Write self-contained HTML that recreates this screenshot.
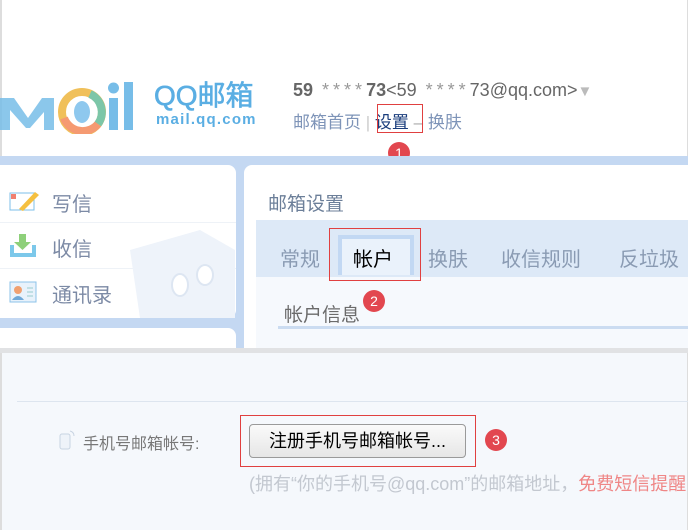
<!DOCTYPE html>
<html><head><meta charset="utf-8"><style>
*{margin:0;padding:0;box-sizing:border-box}
body{width:688px;height:530px;overflow:hidden;background:#fff;font-family:"Liberation Sans","Noto Sans CJK SC",sans-serif;position:relative}
.a{position:absolute}
.badge{position:absolute;width:22px;height:22px;border-radius:50%;background:#e2474f;color:#fff;font-size:14px;line-height:22px;text-align:center}
.nav{font-size:20px;color:#7c8aa5;position:absolute;left:52px}
.st{color:#999;letter-spacing:4px;font-weight:normal}
</style></head><body>
<div class="a" style="left:0;top:0;width:2px;height:530px;background:#ddd"></div>
<div class="a" style="right:0;top:0;width:1px;height:530px;background:#ddd"></div>
<!-- logo -->
<svg class="a" style="left:0;top:78px" width="150" height="56">
<path d="M0 20 L14 20 L28 40 L42 20 L54 20 L54 52 L44 52 L44 34 L30 50 L26 50 L10 32 L10 52 L0 52Z" fill="#77bde8" opacity=".85"/>
<circle cx="82" cy="34" r="20" fill="none" stroke="#f0c05a" stroke-width="8"/>
<path d="M64 40 A20 20 0 0 0 98 46" fill="none" stroke="#f59a72" stroke-width="8"/>
<path d="M90 16 A20 20 0 0 1 98 46" fill="none" stroke="#7cc6a8" stroke-width="8"/>
<ellipse cx="82" cy="34" rx="8" ry="11" fill="#8ec8ee"/>
<rect x="109" y="20" width="9" height="32" fill="#77bde8"/><circle cx="113.5" cy="10" r="5.5" fill="#77bde8"/>
<rect x="124" y="4" width="9" height="48" fill="#77bde8"/>
</svg>
<div class="a" style="left:154px;top:80px;font-size:28px;line-height:32px;color:#5aaee3;-webkit-text-stroke:0.6px #5aaee3">QQ邮箱</div>
<div class="a" style="left:156px;top:111px;font-size:15px;line-height:18px;font-weight:bold;color:#5aaee3;letter-spacing:1.2px">mail.qq.com</div>
<div class="a" style="left:293px;top:80px;font-size:18px;color:#666;white-space:nowrap"><b>59</b><span class="st"> ****</span><b>73</b>&lt;59<span class="st"> ****</span>73@qq.com&gt;<span style="color:#bbb;font-size:15px">▼</span></div>
<div class="a" style="left:293px;top:108px;font-size:17px;color:#7e94b8">邮箱首页 <span style="color:#ccc">|</span> <span style="color:#1a3d7c">设置</span> <span style="color:#aaa">–</span> 换肤</div>
<div class="a" style="left:377px;top:104px;width:46px;height:29px;border:1px solid #e04040"></div>
<div class="badge" style="left:388px;top:142px">1</div>
<!-- blue band -->
<div class="a" style="left:0;top:156px;width:688px;height:192px;background:#c4d8f2"></div>
<div class="a" style="left:0;top:165px;width:236px;height:153px;background:#fff;border-radius:0 8px 8px 0"></div>
<div class="a" style="left:0;top:222px;width:236px;height:1px;background:#eef2f7"></div>
<div class="a" style="left:0;top:268px;width:236px;height:1px;background:#eef2f7"></div>
<svg class="a" style="left:120px;top:230px" width="115" height="88"><path d="M10 20 L80 0 L115 20 L115 88 L20 88Z" fill="#eef3fa"/><ellipse cx="60" cy="55" rx="8" ry="11" fill="#fff" stroke="#dde6f2" stroke-width="2"/><ellipse cx="85" cy="45" rx="8" ry="10" fill="#fff" stroke="#dde6f2" stroke-width="2"/></svg>
<div class="a" style="left:0;top:328px;width:236px;height:20px;background:#fff;border-radius:0 8px 0 0"></div>
<svg class="a" style="left:9px;top:189px" width="30" height="24"><rect x="1" y="4" width="24" height="17" fill="#fff" stroke="#7cbfe8"/><rect x="2" y="5" width="5" height="5" fill="#f08070"/><path d="M10 20 L26 3 L30 6 L14 22 Z" fill="#f5c040"/></svg>
<svg class="a" style="left:9px;top:233px" width="28" height="26"><path d="M10 1 H17 V9 H22 L13.5 17 L5 9 H10Z" fill="#8ed07a"/><path d="M1 12 V24 H27 V12 H23 V20 H5 V12Z" fill="#7cc8ea"/></svg>
<svg class="a" style="left:9px;top:281px" width="28" height="22"><rect x="1" y="1" width="26" height="20" fill="#e8f2fb" stroke="#8cc3e8"/><circle cx="9" cy="9" r="4" fill="#f0a070"/><path d="M3 19 Q9 11 15 19Z" fill="#6fa8d8"/><path d="M18 7h6M18 11h6M18 15h6" stroke="#9cc" /></svg>
<div class="nav" style="top:188px">写信</div>
<div class="nav" style="top:233px">收信</div>
<div class="nav" style="top:279px">通讯录</div>
<!-- right panel -->
<div class="a" style="left:244px;top:165px;width:444px;height:183px;background:#fff;border-radius:8px 0 0 0"></div>
<div class="a" style="left:268px;top:189px;font-size:19px;color:#6c7f99">邮箱设置</div>
<div class="a" style="left:256px;top:220px;width:432px;height:57px;background:#dde9f7"></div>
<div class="a" style="left:256px;top:277px;width:432px;height:71px;background:#f6f9fd"></div>
<div class="a" style="left:338px;top:235px;width:76px;height:40px;background:#eaf2fb;border:4px solid #c2d8f3;border-bottom:none"></div>
<div class="a" style="left:329px;top:228px;width:92px;height:53px;border:1px solid #e04040"></div>
<div class="a" style="left:280px;top:243px;font-size:20px;color:#8a9bb3">常规</div>
<div class="a" style="left:353px;top:243px;font-size:20px;color:#000">帐户</div>
<div class="a" style="left:428px;top:243px;font-size:20px;color:#8a9bb3">换肤</div>
<div class="a" style="left:501px;top:243px;font-size:20px;color:#8a9bb3">收信规则</div>
<div class="a" style="left:619px;top:243px;font-size:20px;color:#8a9bb3">反垃圾</div>
<div class="a" style="left:284px;top:300px;font-size:19px;color:#6b6b6b">帐户信息</div>
<div class="a" style="left:278px;top:326px;width:410px;height:3px;background:#cbdcf1"></div>
<div class="badge" style="left:363px;top:290px">2</div>
<!-- bottom -->
<div class="a" style="left:0;top:348px;width:688px;height:5px;background:#e1e2e4"></div>
<div class="a" style="left:2px;top:353px;width:685px;height:177px;background:#f5f8fc"></div>
<div class="a" style="left:17px;top:401px;width:671px;height:1px;background:#dde5ef"></div>
<svg class="a" style="left:58px;top:428px" width="18" height="22"><rect x="2" y="6" width="10" height="15" rx="2" fill="#eef3f9" stroke="#c8d4e2"/><path d="M12 3 Q16 4 16 8" fill="none" stroke="#c8d4e2"/></svg>
<div class="a" style="left:83px;top:430px;font-size:16px;color:#777">手机号邮箱帐号:</div>
<div class="a" style="left:240px;top:415px;width:236px;height:52px;border:1px solid #e04040"></div>
<div class="a" style="left:249px;top:424px;width:217px;height:34px;border:1px solid #9a9a9a;border-radius:4px;background:linear-gradient(#fafafa,#e6e6e6);font-size:18px;color:#000;text-align:center;line-height:32px">注册手机号邮箱帐号...</div>
<div class="badge" style="left:485px;top:429px">3</div>
<div class="a" style="left:249px;top:470px;font-size:18px;color:#c3c8d0;white-space:nowrap">(拥有“你的手机号@qq.com”的邮箱地址，<span style="color:#ef8686">免费短信提醒</span></div>
</body></html>
